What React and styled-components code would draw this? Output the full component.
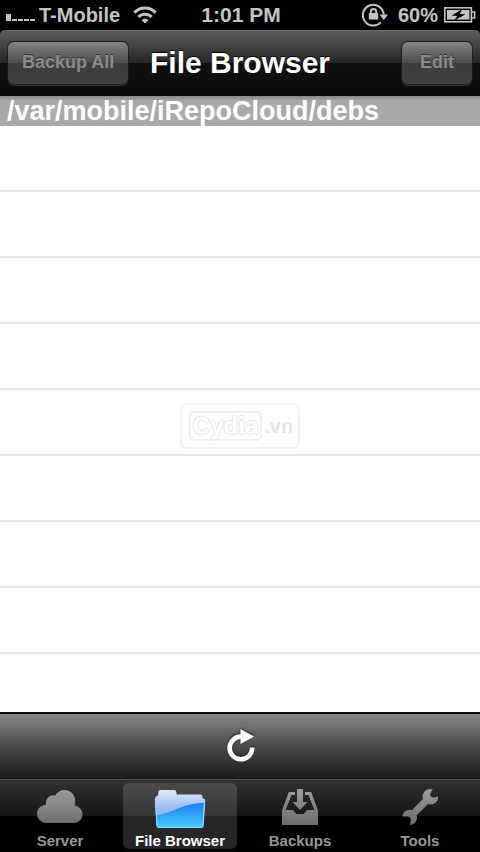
import styled, { createGlobalStyle } from "styled-components";

const tabs = [
  { name: "Server", icon: CloudIcon },
  { name: "File Browser", icon: FolderIcon },
  { name: "Backups", icon: TrayIcon },
  { name: "Tools", icon: WrenchIcon },
];

const App = () => {
  return (
    <Screen>
      <GlobalStyle />
      <StatusBar>
        <div className="carrier">
          <SignalIcon />
          <span>T-Mobile</span>
          <WifiIcon />
        </div>
        <time>1:01 PM</time>
        <div className="battery">
          <LockIcon />
          <span>60%</span>
          <BatteryIcon />
        </div>
      </StatusBar>
      <NavBar>
        <NavButton type="button">Backup All</NavButton>
        <h1>File Browser</h1>
        <NavButton type="button">Edit</NavButton>
      </NavBar>
      <PathHeader>/var/mobile/iRepoCloud/debs</PathHeader>
      <FileList>
        {Array.from({ length: 20 }, (_, i) => (
          <FileRow key={i} />
        ))}
      </FileList>
      <Toolbar>
        <RefreshButton type="button" aria-label="Refresh">
          <RefreshIcon />
        </RefreshButton>
      </Toolbar>
      <TabBar>
        {tabs.map(({ name, icon: Icon }) => (
          <Tab key={name} type="button" $active={name === "File Browser"}>
            <Icon />
            <span>{name}</span>
          </Tab>
        ))}
      </TabBar>
      <Watermark>
        <strong>Cydia</strong>
        <span>.vn</span>
      </Watermark>
    </Screen>
  )
}

function SignalIcon() {
  return (
    <svg width="30" height="16" fill="#c4c4c4">
      <rect x="0" y="7" width="5" height="7" />
      <rect x="6" y="12" width="5" height="2" />
      <rect x="12" y="12" width="5" height="2" />
      <rect x="18" y="12" width="5" height="2" />
      <rect x="24" y="12" width="5" height="2" />
    </svg>
  )
}

function WifiIcon() {
  return (
    <svg width="24" height="18" fill="none" stroke="#c4c4c4" strokeWidth="3">
      <path d="M1.3 6.6C7.2 .3 16.8 .3 22.7 6.6" />
      <path d="M5.4 11C9 7.2 15 7.2 18.6 11" />
      <path d="M12 17.6L8.6 14.2C10.4 12.2 13.6 12.2 15.4 14.2Z" fill="#c4c4c4" stroke="none" />
    </svg>
  )
}

function LockIcon() {
  return (
    <svg width="26" height="24" fill="none" stroke="#c4c4c4" strokeWidth="2">
      <path d="M18.8 19.4A10.4 10.4 0 1 1 21.7 11.5" />
      <path d="M17.5 11.5H26L21.8 17Z" fill="#c4c4c4" stroke="none" />
      <rect x="6.8" y="10" width="9.4" height="6.6" rx=".5" fill="#c4c4c4" stroke="none" />
      <path d="M8.8 11V8.6A2.7 2.7 0 0 1 14.2 8.6V11" />
    </svg>
  )
}

function BatteryIcon() {
  return (
    <svg width="32" height="16" fill="none" stroke="#c4c4c4" strokeWidth="1.6">
      <rect x=".8" y=".8" width="26.6" height="14" />
      <path d="M28 5H30.6V11H28" />
      <rect x="3" y="3" width="22.4" height="9.6" fill="#c4c4c4" stroke="none" />
      <path d="M18.5 2L7.5 8.6L13.2 8.9L10 13.8L21.5 7.3L15.7 6.9Z" fill="#000" stroke="none" />
    </svg>
  )
}

function RefreshIcon() {
  return (
    <svg width="30" height="36">
      <path d="M27.2 18.5A11.3 11.3 0 1 1 17 7.7" fill="none" stroke="#fff" strokeWidth="4.6" />
      <path d="M15.5 0L29 7.5L15.5 15Z" fill="#fff" />
    </svg>
  )
}

function GreyGradient({ id }) {
  return (
    <linearGradient id={id} x1="0" y1="0" x2="0" y2="36" gradientUnits="userSpaceOnUse">
      <stop offset="0" stopColor="#9c9c9c" />
      <stop offset="1" stopColor="#6c6c6c" />
    </linearGradient>
  )
}

function CloudIcon() {
  return (
    <svg width="46" height="36">
      <GreyGradient id="cloud" />
      <path
        fill="url(#cloud)"
        d="M9 34A9 9 0 0 1 0 25C0 20.5 3.5 16.3 9 15.6C8.2 9.5 13 5.2 18.2 6.6C20.3 3 23.8 1 27.6 1C34 1 38.6 6.4 38.2 12.6C38.1 14.2 37.9 15.2 37.4 16.4C42.5 17 45.5 20.8 45.5 25.2C45.5 30 41.6 34 37 34Z"
      />
    </svg>
  )
}

function FolderIcon() {
  return (
    <svg width="52" height="40">
      <linearGradient id="folderBack" x1="0" y1="0" x2="0" y2="1">
        <stop offset="0" stopColor="#e2eaf8" />
        <stop offset=".45" stopColor="#9dbdf0" />
        <stop offset="1" stopColor="#5ab8f8" />
      </linearGradient>
      <linearGradient id="folderFront" x1="0" y1="0" x2="0" y2="1">
        <stop offset="0" stopColor="#1c7cf0" />
        <stop offset="1" stopColor="#42ccff" />
      </linearGradient>
      <path
        fill="url(#folderBack)"
        d="M6.5 1H20.5Q22 1 22.3 3L22.8 5.5H47L48.5 7V9L51.2 10.5L49.7 37Q49.6 39 47.7 39H4.5Q2.6 39 2.5 37L.8 10.5L1.5 8L4.3 6V3Q4.5 1 6.5 1Z"
      />
      <path fill="url(#folderFront)" d="M2.6 26C18 24.8 26 15 50 13.8L48.7 36.6Q48.5 38 47 38H5Q3.5 38 3.4 36.6Z" />
      <path
        fill="none"
        stroke="#8fdcff"
        d="M1.4 11L3 36.8Q3.2 38.4 5 38.4H47Q48.8 38.4 49 36.8L50.6 11"
      />
    </svg>
  )
}

function TrayIcon() {
  return (
    <svg width="36" height="36">
      <GreyGradient id="tray" />
      <g fill="url(#tray)">
        <path d="M15 0H21V13H25.5L18 21L10.5 13H15Z" />
        <path d="M6.8 3H13V6H9.5L3.6 21H11L14.2 25H21.8L25 21H32.4L26.5 6H23V3H29.2L36 21.5V36H0V21.5Z" />
      </g>
    </svg>
  )
}

function WrenchIcon() {
  return (
    <svg width="36" height="36">
      <GreyGradient id="wrench" />
      <mask id="jaws">
        <rect width="36" height="36" fill="#fff" />
        <path d="M38 -6L30 1.2L28 5.2Q28.4 8.4 31.6 8.6L35 8L42 2Z" />
        <path d="M-6 38L-1 27.6L5 27.4Q8.6 27.8 8.8 31L8 37Z" />
      </mask>
      <g mask="url(#jaws)">
        <circle cx="28.4" cy="7.8" r="7.8" fill="url(#wrench)" />
        <circle cx="7.6" cy="28.4" r="7.6" fill="url(#wrench)" />
        <path d="M21.5 10L26 14.5L14 26.5L9.5 22Z" fill="url(#wrench)" stroke="url(#wrench)" strokeWidth="1" />
      </g>
    </svg>
  )
}

const GlobalStyle = createGlobalStyle`
  * {
    box-sizing: border-box;
  }

  body {
    margin: 0;
    background: black;
    font-family: "Liberation Sans", Arial, sans-serif;
    font-weight: bold;
  }

  button {
    font: inherit;
    border: none;
    padding: 0;
    cursor: pointer;
  }

  svg {
    display: block;
    flex-shrink: 0;
  }
`

const Screen = styled.main`
  position: relative;
  display: flex;
  flex-direction: column;
  height: 100vh;
  overflow: hidden;
`

const StatusBar = styled.header`
  display: grid;
  grid-template-columns: 1fr auto 1fr;
  align-items: center;
  height: 30px;
  padding: 0 4px 0 6px;
  font-size: 20px;
  color: #c4c4c4;

  time{
    font-size: 21px;
  }

  .carrier, .battery{
    display: flex;
    align-items: center;
  }

  .carrier{
    gap: 3px;
  }

  .carrier span{
    margin-right: 10px;
  }

  .battery{
    justify-content: flex-end;
    gap: 6px;
  }

  .battery span{
    margin-left: 4px;
  }
`

const NavBar = styled.nav`
  display: grid;
  grid-template-columns: 1fr auto 1fr;
  align-items: center;
  height: 66px;
  padding: 0 8px 2px;
  border-radius: 5px 5px 0 0;
  border-top: 1px solid #6a6a6a;
  background: linear-gradient(#5c5c5c, #242424 50%, #101010 50%, #0b0b0b);

  h1{
    margin: 0;
    font-size: 30px;
    color: white;
    text-shadow: 0 -1px 1px black;
  }
`

const NavButton = styled.button`
  height: 42px;
  padding: 0 14px;
  border-radius: 6px;
  background: linear-gradient(#858585, #4b4b4b 50%, #3c3c3c 50%, #404040);
  box-shadow: 0 0 1px 1px #1c1c1c, 0 2px 0 #333;
  font-size: 18px;
  color: #8c8c8c;
  text-shadow: 0 -1px 0 #333;
  justify-self: start;

  &:last-child{
    padding-inline: 18px;
    justify-self: end;
  }
`

const PathHeader = styled.h2`
  margin: 0;
  padding-left: 7px;
  background: linear-gradient(#888, #a9a9a9 5px);
  font-size: 27px;
  line-height: 30px;
  color: white;
`

const FileList = styled.ul`
  flex: 1 1 0;
  margin: 0;
  padding: 0;
  overflow: hidden;
  list-style: none;
  background: white;
`

const FileRow = styled.li`
  height: 66px;
  border-bottom: 2px solid #e6e6e6;
`

const Toolbar = styled.div`
  display: flex;
  align-items: center;
  justify-content: center;
  height: 67px;
  border-top: 2px solid #0c0c0c;
  background: linear-gradient(#888, #505050 45%, #2c2d2e 80%, #171717);
`

const RefreshButton = styled.button`
  background: none;

  svg{
    filter: drop-shadow(0 -1px 1px #222);
  }
`

const TabBar = styled.nav`
  display: grid;
  grid-template-columns: repeat(4, 1fr);
  gap: 6px;
  height: 73px;
  padding: 3px;
  border-top: 1px solid #4c4c4c;
  background: linear-gradient(#303030, #161616 36px, #000 36px);
`

const Tab = styled.button`
  display: flex;
  flex-direction: column;
  align-items: center;
  justify-content: space-between;
  padding-top: 6px;
  border-radius: 6px;
  background: ${({ $active }) => $active ? "linear-gradient(#4a4a4a, #353535 33px, #262626 33px)" : "none"};
  font-size: 15px;
  line-height: 16px;
  color: ${({ $active }) => $active ? "white" : "#969696"};
  white-space: nowrap;
`

const Watermark = styled.div`
  position: absolute;
  top: 50%;
  left: 50%;
  transform: translate(-50%, -50%);
  display: flex;
  align-items: center;
  gap: 2px;
  height: 46px;
  padding: 0 5px 0 7px;
  border: 2px solid #f3f3f3;
  border-radius: 7px;
  background: white;
  font-size: 20px;
  color: #e6e6e6;
  pointer-events: none;

  strong{
    padding: 0 2px;
    border: 2px solid #efefef;
    border-radius: 5px;
    font-size: 24px;
    line-height: 26px;
    color: white;
    text-shadow: 1px 0 1px #e6e6e6, -1px 0 1px #e6e6e6, 0 1px 1px #e6e6e6, 0 -1px 1px #e6e6e6;
  }
`

export default App
